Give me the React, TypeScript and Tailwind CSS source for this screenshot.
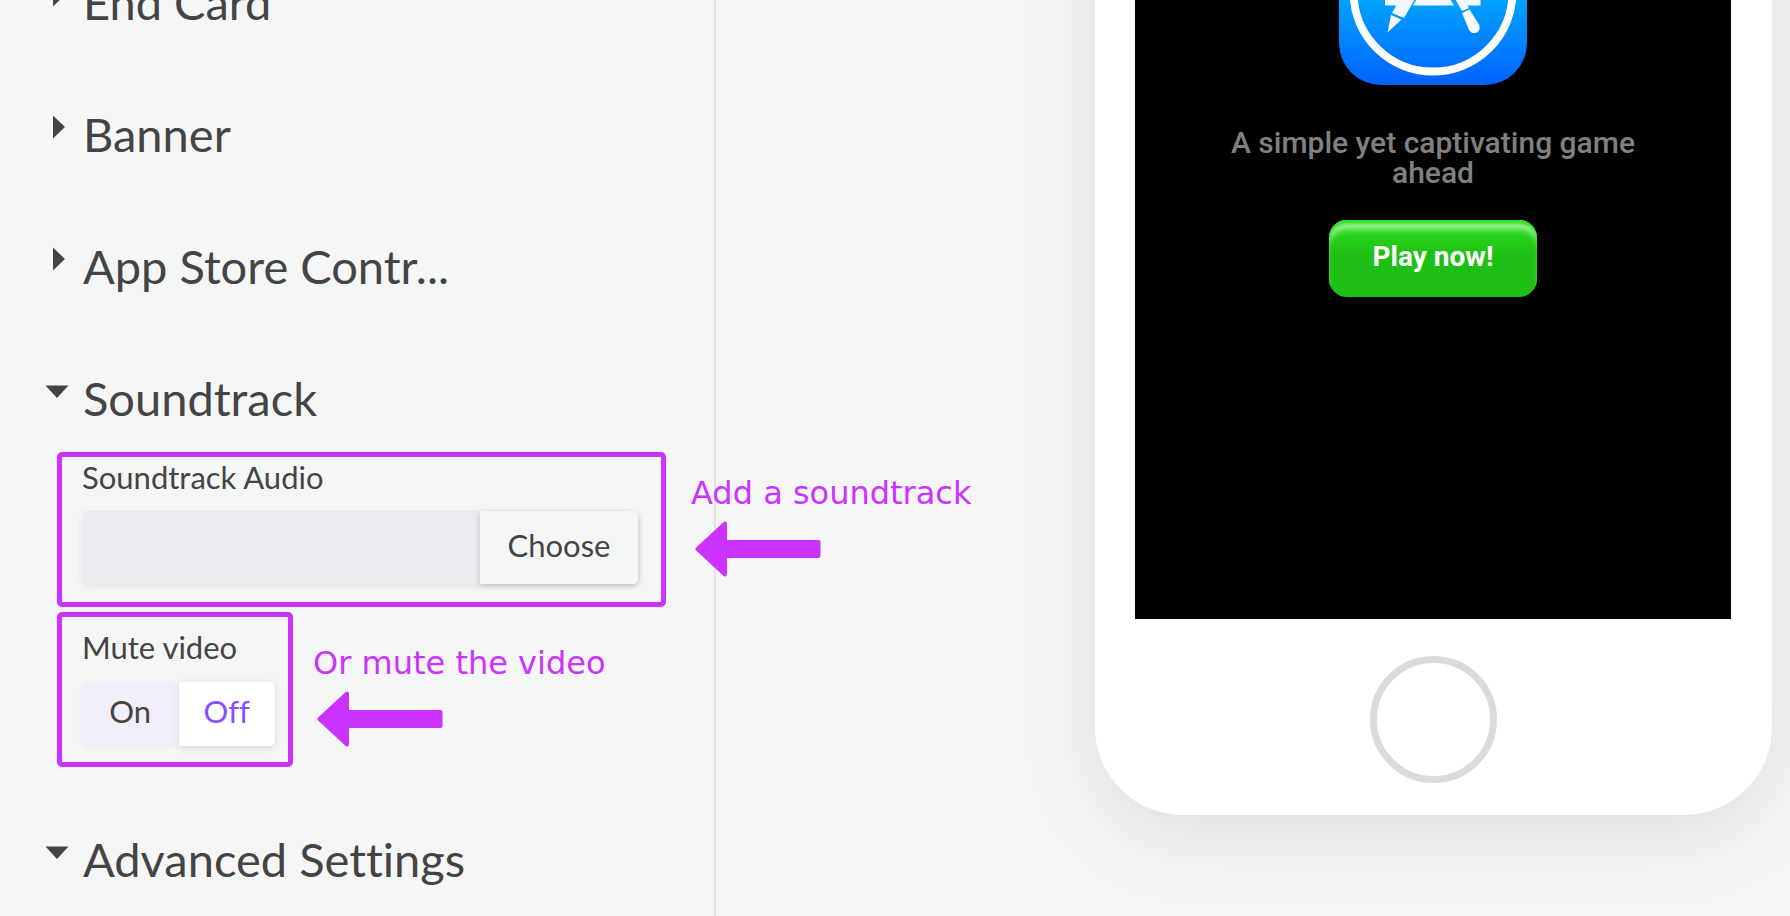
import { useState } from "react";
import type { ReactNode } from "react";

function Caret({ open }: { open: boolean }) {
  return (
    <svg className="mt-[9px] shrink-0" width="24" height="24" viewBox="0 0 24 24" aria-hidden="true">
      <path d={open ? "M0.500 6.500H23.500L12 19Z" : "M8 0.500L20 12L8 23.500Z"} fill="#444" />
    </svg>
  );
}

function Section({ title, open = false, children }: { title: string; open?: boolean; children?: ReactNode }) {
  return (
    <section>
      <h2>
        <button
          type="button"
          aria-expanded={open}
          className="flex items-start gap-[14px] pl-[45px] text-left text-[47px] leading-[56px] text-[#444]"
        >
          <Caret open={open} />
          <span>{title}</span>
        </button>
      </h2>
      {children}
    </section>
  );
}

function Callout({
  text,
  boxClass,
  noteClass,
  children,
}: {
  text: string;
  boxClass: string;
  noteClass: string;
  children: ReactNode;
}) {
  return (
    <div className={`relative ml-[57px] w-fit rounded-[5px] border-[5px] border-[#cc33ff] pl-5 ${boxClass}`}>
      {children}
      <div
        className={`absolute left-full whitespace-nowrap font-['DejaVu_Sans',sans-serif] text-[32px] leading-10 text-[#cc33ff] ${noteClass}`}
      >
        <p>{text}</p>
        <svg className="mt-2 ml-1" width="126" height="56" viewBox="0 0 126 56" aria-hidden="true">
          <path
            d="M2.500 28L30 2.500V53.500ZM30 21H123.500V35H30Z"
            fill="#c3f"
            stroke="#c3f"
            strokeWidth="4"
            strokeLinejoin="round"
          />
        </svg>
      </div>
    </div>
  );
}

function StoreIcon() {
  return (
    <svg width="188" height="188" viewBox="0 0 188 188" role="img" aria-label="App icon">
      <defs>
        <linearGradient id="store" x1="0" y1="0" x2="0" y2="1">
          <stop offset="0" stopColor="#1ac8fc" />
          <stop offset="0.55" stopColor="#00a2ff" />
          <stop offset="1" stopColor="#0062ff" />
        </linearGradient>
      </defs>
      <rect width="188" height="188" rx="42" fill="url(#store)" />
      <circle cx="94" cy="95" r="79.5" fill="none" stroke="#fff" strokeWidth="8" />
      <g fill="#f3f9ff">
        <path d="M46 92H68L58 108.500H46Z" />
        <path d="M83.500 92H105.500L115 108.500H74Z" />
        <path d="M118 92H141.500V108.500H128.500Z" />
        <path d="M102 32L113 38L65 121L53 116Z" />
        <path d="M52 118L62.500 122.500L48.500 135.500Z" />
        <path d="M79 38L86 34L130 111L123 114Z" />
        <path d="M123 116L130.500 112.500L140 127.500Q142 133 138 135.500Q132.500 137.500 130 133Z" />
      </g>
    </svg>
  );
}

export default function App() {
  const [muted, setMuted] = useState("Off");
  return (
    <main className="flex min-h-screen overflow-hidden bg-[#f5f7f6] font-[Lato,sans-serif] text-[#444] [font-variant-ligatures:none]">
      <aside className="-mt-[26px] w-2/5 shrink-0 border-r-2 border-[#e2e4e3]">
        <div className="flex flex-col gap-[76px]">
          <Section title="End Card" />
          <Section title="Banner" />
          <Section title="App Store Contr..." />
          <Section title="Soundtrack" open>
            <div className="mt-[26px] -mb-3 flex flex-col gap-[5px]">
              <Callout text="Add a soundtrack" boxClass="pr-[23px]" noteClass="top-4 ml-[30px]">
                <label htmlFor="audio" className="block pt-[2px] text-[31px] leading-9">
                  Soundtrack Audio
                </label>
                <div className="mt-4 mb-[18px] flex h-[73px] rounded-[5px] shadow-[0_2px_6px_rgba(0,0,0,0.08)]">
                  <input id="audio" type="text" readOnly className="w-[398px] rounded-l-[5px] bg-[#eaebef] px-4 text-[31px]" />
                  <button
                    type="button"
                    className="w-[158px] rounded-r-[5px] bg-[#f5f7f6] pb-1 text-[31px] shadow-[0_2px_6px_rgba(0,0,0,0.18)]"
                  >
                    Choose
                  </button>
                </div>
              </Callout>
              <Callout text="Or mute the video" boxClass="pr-[13px]" noteClass="top-[26px] ml-[25px]">
                <fieldset>
                  <legend className="pt-3 text-[31px] leading-9">Mute video</legend>
                  <div className="mt-[17px] mb-4 flex h-16 w-[193px] rounded-[5px] shadow-[0_1px_4px_rgba(0,0,0,0.06)]">
                    {["On", "Off"].map((value) => (
                      <label
                        key={value}
                        className="flex flex-1 items-center justify-center bg-[#f2eefa] pb-[6px] text-[31px] leading-9 first:rounded-l-[5px] last:rounded-r-[5px] has-checked:bg-white has-checked:text-[#8652ff] has-checked:shadow-[0_2px_8px_rgba(0,0,0,0.09)]"
                      >
                        <input
                          type="radio"
                          name="mute"
                          value={value}
                          checked={muted === value}
                          onChange={() => setMuted(value)}
                          className="sr-only"
                        />
                        {value}
                      </label>
                    ))}
                  </div>
                </fieldset>
              </Callout>
            </div>
          </Section>
          <Section title="Advanced Settings" open />
        </div>
      </aside>
      <section className="flex flex-1 items-start justify-end pr-[18px]">
        <div className="-mt-40 flex w-[677px] flex-col items-center rounded-[88px] bg-white pr-[41px] pb-8 pl-10 shadow-[0_20px_80px_rgba(0,0,0,0.1)]">
          <div className="flex h-[779px] w-full flex-col items-center bg-black px-20 pt-[57px] font-[Roboto,sans-serif]">
            <StoreIcon />
            <p className="mt-[43px] text-center text-[30px] leading-[30px] font-medium text-[#808080]">
              A simple yet captivating game ahead
            </p>
            <button
              type="button"
              className="mt-8 h-[77px] w-[208px] rounded-[18px] bg-linear-to-b from-[#2be31c] to-[#1fc015] to-45% pb-1 text-[28px] font-bold text-white shadow-[inset_0_4px_3px_#34e226,inset_0_12px_6px_-3px_rgba(255,255,255,0.6)]"
            >
              Play now!
            </button>
          </div>
          <button
            type="button"
            aria-label="Home"
            className="mt-[37px] size-[127px] rounded-full border-[7px] border-[#dbdbdb]"
          />
        </div>
      </section>
    </main>
  );
}
